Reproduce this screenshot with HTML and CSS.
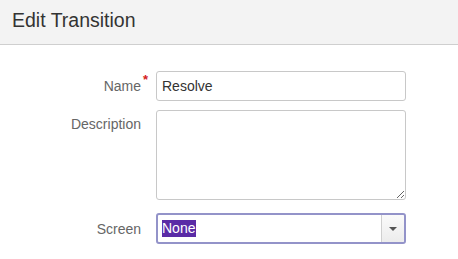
FILE: index.html
```
<!DOCTYPE html>
<html>
<head>
<meta charset="utf-8">
<link rel="stylesheet" href="styles.css">
</head>
<body>
<div class="header"><h1 class="title">Edit Transition</h1></div>
<form class="form">
  <div class="row row-name">
    <label class="label">Name<span class="req">*</span></label>
    <input class="field input" type="text" value="Resolve">
  </div>
  <div class="row row-desc">
    <label class="label label-top">Description</label>
    <textarea class="field textarea"></textarea>
  </div>
  <div class="row row-screen">
    <label class="label">Screen</label>
    <div class="field select">
      <div class="select-value"><span class="sel">None</span></div>
      <div class="select-btn"><span class="caret"></span></div>
    </div>
  </div>
</form>
</body>
</html>
```
FILE: styles.css
```
html, body {
  margin: 0;
  padding: 0;
  background: #fff;
  font-family: "Liberation Sans", Arial, sans-serif;
}
.header {
  height: 45px;
  background: #f3f3f3;
  border-bottom: 1px solid #cfcfcf;
  box-sizing: border-box;
  display: flex;
  align-items: center;
  padding-left: 12px;
}
.title {
  margin: 0;
  font-weight: normal;
  font-size: 19.5px;
  color: #333;
  position: relative;
  top: -2px;
}
.form {
  margin: 0;
  padding-top: 26px;
}
.row {
  display: flex;
  align-items: center;
}
.row-desc {
  align-items: flex-start;
  margin-top: 9px;
}
.row-screen {
  margin-top: 13px;
}
.label {
  width: 141px;
  text-align: right;
  font-size: 14px;
  color: #666;
  margin-right: 15px;
  box-sizing: border-box;
  position: relative;
}
.label-top {
  padding-top: 6px;
}
.req {
  position: absolute;
  right: -7px;
  top: -6px;
  color: #d42020;
  font-size: 13px;
  font-weight: bold;
}
.field {
  width: 250px;
  box-sizing: border-box;
  border: 1px solid #c8c8c8;
  border-radius: 3px;
  font-family: "Liberation Sans", Arial, sans-serif;
  font-size: 14px;
  color: #333;
  background: #fff;
  margin: 0;
}
.input {
  height: 30px;
  padding: 0 5px;
  outline: none;
}
.textarea {
  height: 90px;
  padding: 4px 5px;
  resize: vertical;
  display: block;
  outline: none;
}
.select {
  height: 31px;
  border: 2px solid #9393c9;
  display: flex;
  align-items: stretch;
}
.select-value {
  flex: 1;
  display: flex;
  align-items: center;
  padding-left: 4px;
}
.sel {
  background: #5a2ba6;
  color: #fff;
  line-height: 17px;
  padding: 0 1px 0 0;
}
.select-btn {
  width: 22px;
  border-left: 1px solid #cfcfcf;
  background: linear-gradient(#fafafa, #ececec);
  display: flex;
  align-items: center;
  justify-content: center;
  border-radius: 0 2px 2px 0;
}
.caret {
  width: 0;
  height: 0;
  border-left: 4px solid transparent;
  border-right: 4px solid transparent;
  border-top: 4px solid #555;
}
```
